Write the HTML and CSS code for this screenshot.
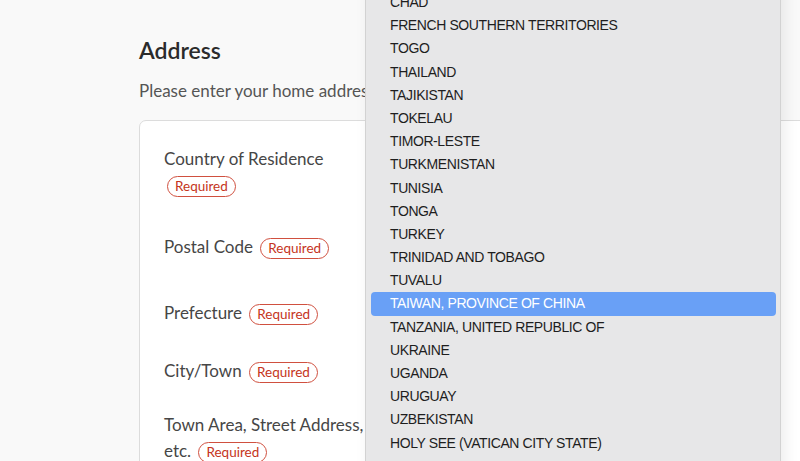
FILE: index.html
```html
<!DOCTYPE html>
<html>
<head>
<meta charset="utf-8">
<link rel="stylesheet" href="styles.css">
</head>
<body>
<main class="page">
  <h1 class="title">Address</h1>
  <p class="subtitle">Please enter your home address as it appears on your ID.</p>
  <section class="card">
    <div class="row row-country">
      <div class="label">Country of Residence <span class="req">Required</span></div>
    </div>
    <div class="row row-postal">
      <div class="label">Postal Code <span class="req">Required</span></div>
    </div>
    <div class="row row-pref">
      <div class="label">Prefecture <span class="req">Required</span></div>
    </div>
    <div class="row row-city">
      <div class="label">City/Town <span class="req">Required</span></div>
    </div>
    <div class="row row-street">
      <div class="label">Town Area, Street Address, etc. <span class="req">Required</span></div>
    </div>
  </section>
</main>
<ul class="menu">
  <li>CHAD</li>
  <li>FRENCH SOUTHERN TERRITORIES</li>
  <li>TOGO</li>
  <li>THAILAND</li>
  <li>TAJIKISTAN</li>
  <li>TOKELAU</li>
  <li>TIMOR-LESTE</li>
  <li>TURKMENISTAN</li>
  <li>TUNISIA</li>
  <li>TONGA</li>
  <li>TURKEY</li>
  <li>TRINIDAD AND TOBAGO</li>
  <li>TUVALU</li>
  <li class="active">TAIWAN, PROVINCE OF CHINA</li>
  <li>TANZANIA, UNITED REPUBLIC OF</li>
  <li>UKRAINE</li>
  <li>UGANDA</li>
  <li>URUGUAY</li>
  <li>UZBEKISTAN</li>
  <li>HOLY SEE (VATICAN CITY STATE)</li>
  <li>SAINT VINCENT AND THE GRENADINES</li>
</ul>
</body>
</html>
```
FILE: styles.css
```css
html, body {
  margin: 0;
  padding: 0;
  height: 100%;
  overflow: hidden;
}
body {
  background: #f9f9f9;
  font-family: Lato, "Open Sans", sans-serif;
  color: #3c3c3c;
  position: relative;
}
.page {
  padding: 36px 0 0 139px;
}
.title {
  margin: 0;
  font-size: 23px;
  font-weight: 600;
  line-height: 28px;
  color: #2b2b2b;
}
.subtitle {
  margin: 14px 0 0;
  font-size: 17px;
  line-height: 26px;
  color: #555;
  white-space: nowrap;
}
.card {
  margin-top: 16px;
  background: #fff;
  border: 1px solid #dcdcdc;
  border-radius: 7px;
  padding: 25px 0 0 24px;
  height: 400px;
  width: 700px;
}
.row {
  width: 200px;
}
.label {
  font-size: 17px;
  line-height: 26px;
  color: #464646;
}
.req {
  display: inline-block;
  border: 1.5px solid #d0503f;
  color: #c53420;
  border-radius: 11px;
  font-size: 13.5px;
  line-height: 19px;
  padding: 0 7px;
  margin-left: 3px;
  vertical-align: 0;
}
.row-country .req { margin-top: 2px; }
.row-postal { margin-top: 36px; }
.row-pref { margin-top: 40px; }
.row-city { margin-top: 32px; }
.row-street { margin-top: 28px; }

.menu {
  position: absolute;
  left: 365px;
  top: -12px;
  width: 414px;
  height: 490px;
  margin: 0;
  padding: 3px 0 0;
  list-style: none;
  background: #e7e7e8;
  border-left: 1px solid #d2d2d2;
  border-right: 1px solid #d2d2d2;
  box-shadow: 4px 0 14px rgba(0, 0, 0, 0.08);
  font-family: "Liberation Sans", Arial, sans-serif;
  font-size: 14px;
  letter-spacing: -0.4px;
  color: #1e1e1e;
}
.menu li {
  height: 23.2px;
  line-height: 23.2px;
  margin: 0 4px 0 5px;
  padding-left: 19px;
  border-radius: 4px;
  white-space: nowrap;
}
.menu li.active {
  background: #69a0f6;
  color: #fff;
}
```
